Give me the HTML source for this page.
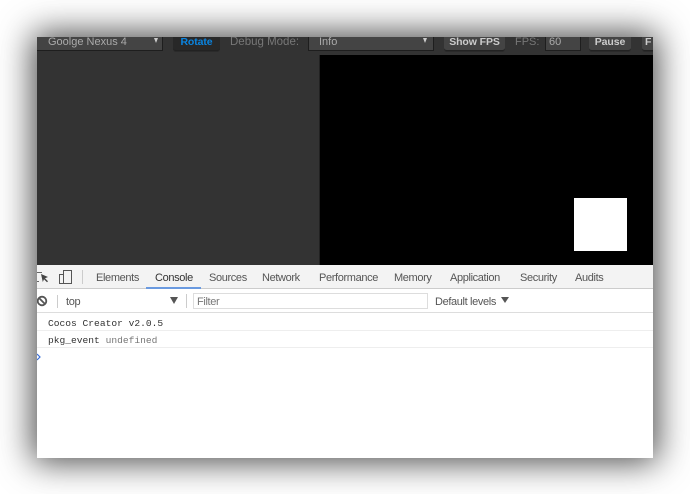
<!DOCTYPE html>
<html><head><meta charset="utf-8"><style>
html,body{margin:0;padding:0;background:#fff}
body{width:690px;height:494px;position:relative;overflow:hidden;font-family:"Liberation Sans",sans-serif}
#w{position:absolute;left:37px;top:37px;width:616px;height:421px;background:#fff;box-shadow:0 0 32px 4px rgba(0,0,0,.72);overflow:hidden}
#w div{position:absolute;white-space:nowrap}
.t{font-size:11px;letter-spacing:-.36px;color:#555;top:234px;line-height:14px;filter:blur(.3px)}
.btn{background:#444;border-radius:0 0 3px 3px;border-bottom:1px solid #222;box-shadow:0 1px 0 #2a2a2a;color:#ccc;font-weight:bold;font-size:10.5px;letter-spacing:-.1px;text-align:center;top:0;height:13px;line-height:10px}
.sel{background:#444;border-bottom:1px solid #1e1e1e;border-right:1px solid #1e1e1e;border-left:1px solid #1e1e1e;top:0;height:13px;color:#aaa;font-size:11px;line-height:10px}
.lab{color:#777;font-size:11.5px;top:0;line-height:10px}
.tri{width:0;height:0;border-left:2.5px solid transparent;border-right:2.5px solid transparent;border-top:5px solid #ccc;top:1px}
.m{font-family:"Liberation Mono",monospace;font-size:9.6px;line-height:12px;color:#333;filter:blur(.3px)}
</style></head><body>
<div id="w">
<div style="left:0;top:0;width:616px;height:228px;background:#333"></div>
<div class="sel" style="left:-1px;width:125px;text-indent:11px">Goolge Nexus 4</div>
<div class="tri" style="left:117px"></div>
<div class="btn" style="left:136px;width:47px;background:#282828;color:#0a84e0">Rotate</div>
<div class="lab" style="left:193px">Debug Mode:</div>
<div class="sel" style="left:271px;width:124px;text-indent:10px">Info</div>
<div class="tri" style="left:386px"></div>
<div class="btn" style="left:407px;width:61px">Show FPS</div>
<div class="lab" style="left:478px;font-size:11px">FPS:</div>
<div class="sel" style="left:508px;width:34px;text-indent:3px">60</div>
<div class="btn" style="left:552px;width:42px">Pause</div>
<div class="btn" style="left:605px;width:14px;text-align:left;text-indent:3px">F</div>
<div style="left:283px;top:18px;width:333px;height:210px;background:#000"></div>
<div style="left:282px;top:18px;width:1px;height:210px;background:#222"></div>
<div style="left:537px;top:161px;width:53px;height:53px;background:#fff"></div>

<div style="left:0;top:228px;width:616px;height:23px;background:#f3f3f3;border-bottom:1px solid #ccc"></div>
<svg style="position:absolute;left:0;top:232px" width="40" height="18" viewBox="0 0 40 18"><path d="M0 3.5H5M0 12.5H2" stroke="#666" fill="none"/><path d="M4 5l7 3-3 1.2 3 3-1 1-3-3-1.2 2.8z" fill="#444"/><rect x="26.5" y="1.5" width="8" height="13" fill="none" stroke="#555"/><rect x="22.5" y="5.5" width="4" height="9" fill="#f3f3f3" stroke="#555"/></svg>
<div style="left:45px;top:233px;width:1px;height:14px;background:#ccc"></div>
<div class="t" style="left:59px">Elements</div>
<div class="t" style="left:118px;color:#333">Console</div>
<div style="left:109px;top:250px;width:55px;height:2px;background:#6a9ae0"></div>
<div class="t" style="left:172px">Sources</div>
<div class="t" style="left:225px">Network</div>
<div class="t" style="left:282px">Performance</div>
<div class="t" style="left:357px">Memory</div>
<div class="t" style="left:413px">Application</div>
<div class="t" style="left:483px">Security</div>
<div class="t" style="left:538px">Audits</div>

<svg style="position:absolute;left:0;top:258px" width="12" height="12" viewBox="0 0 12 12"><circle cx="5" cy="6" r="4.3" fill="none" stroke="#555" stroke-width="1.8"/><path d="M2 3l6 6" stroke="#555" stroke-width="1.8"/></svg>
<div style="left:20px;top:258px;width:1px;height:13px;background:#ccc"></div>
<div class="t" style="left:29px;top:258px">top</div>
<div class="tri" style="left:133px;top:260px;border-left-width:4px;border-right-width:4px;border-top:7px solid #555"></div>
<div style="left:149px;top:257px;width:1px;height:14px;background:#ccc"></div>
<div style="left:156px;top:256px;width:233px;height:14px;border:1px solid #ddd;background:#fff"></div>
<div class="t" style="left:160px;top:258px;color:#777">Filter</div>
<div class="t" style="left:398px;top:258px">Default levels</div>
<div class="tri" style="left:464px;top:260px;border-left-width:4px;border-right-width:4px;border-top:6px solid #555"></div>
<div style="left:0;top:275px;width:616px;height:1px;background:#ddd"></div>

<div class="m" style="left:11px;top:281px">Cocos Creator v2.0.5</div>
<div style="left:0;top:293px;width:616px;height:1px;background:#eee"></div>
<div class="m" style="left:11px;top:298px">pkg_event <span style="color:#777">undefined</span></div>
<div style="left:0;top:310px;width:616px;height:1px;background:#eee"></div>
<svg style="position:absolute;left:0;top:316px" width="5" height="8" viewBox="0 0 5 8"><path d="M0 1l3 3-3 3" fill="none" stroke="#3a6fd8" stroke-width="1.2"/></svg>
</div>
</body></html>
